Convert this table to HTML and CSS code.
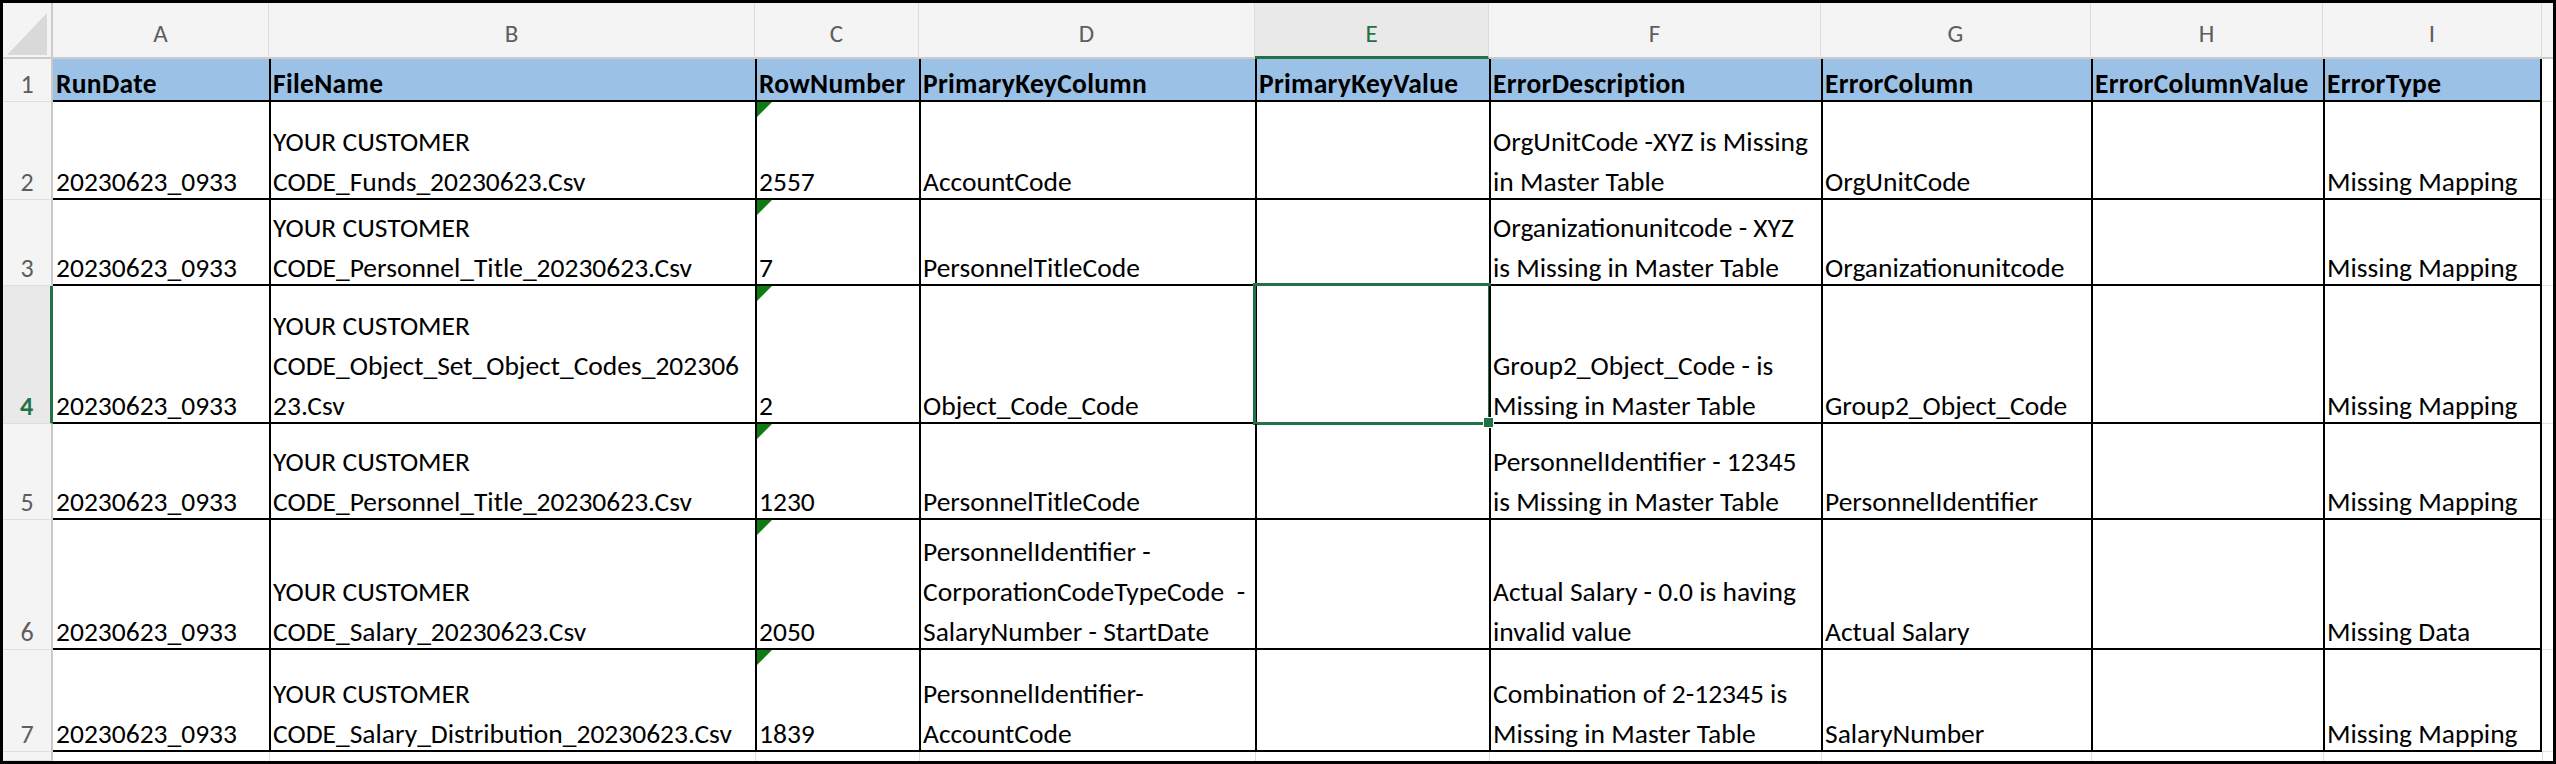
FILE: index.html
```html
<!DOCTYPE html>
<html lang="en">
<head>
<meta charset="utf-8">
<title>Error Log</title>
<link rel="stylesheet" href="styles.css">
</head>
<body>
<div class="frame">
  <div class="sheet">
    <div class="corner"><svg width="50" height="56" viewBox="0 0 50 56"><polygon points="4,52 44,52 44,10" fill="#d9d9d9"/></svg></div>
    <div class="colhdr">A</div>
    <div class="colhdr">B</div>
    <div class="colhdr">C</div>
    <div class="colhdr">D</div>
    <div class="colhdr active">E</div>
    <div class="colhdr">F</div>
    <div class="colhdr">G</div>
    <div class="colhdr">H</div>
    <div class="colhdr">I</div>
    <div class="colhdr last"></div>

    <div class="rowhdr"><span>1</span></div>
    <div class="cell hd ca"><span>RunDate</span></div>
    <div class="cell hd"><span>FileName</span></div>
    <div class="cell hd"><span>RowNumber</span></div>
    <div class="cell hd"><span>PrimaryKeyColumn</span></div>
    <div class="cell hd"><span>PrimaryKeyValue</span></div>
    <div class="cell hd"><span>ErrorDescription</span></div>
    <div class="cell hd"><span>ErrorColumn</span></div>
    <div class="cell hd"><span>ErrorColumnValue</span></div>
    <div class="cell hd ci"><span>ErrorType</span></div>
    <div class="jcell"></div>

    <div class="rowhdr"><span>2</span></div>
    <div class="cell ca"><span>20230623_0933</span></div>
    <div class="cell"><span>YOUR CUSTOMER<br>CODE_Funds_20230623.Csv</span></div>
    <div class="cell flag"><span>2557</span></div>
    <div class="cell"><span>AccountCode</span></div>
    <div class="cell"><span></span></div>
    <div class="cell"><span>OrgUnitCode -XYZ is Missing<br>in Master Table</span></div>
    <div class="cell"><span>OrgUnitCode</span></div>
    <div class="cell"><span></span></div>
    <div class="cell ci"><span>Missing Mapping</span></div>
    <div class="jcell"></div>

    <div class="rowhdr"><span>3</span></div>
    <div class="cell ca"><span>20230623_0933</span></div>
    <div class="cell"><span>YOUR CUSTOMER<br>CODE_Personnel_Title_20230623.Csv</span></div>
    <div class="cell flag"><span>7</span></div>
    <div class="cell"><span>PersonnelTitleCode</span></div>
    <div class="cell"><span></span></div>
    <div class="cell"><span>Organizationunitcode - XYZ<br>is Missing in Master Table</span></div>
    <div class="cell"><span>Organizationunitcode</span></div>
    <div class="cell"><span></span></div>
    <div class="cell ci"><span>Missing Mapping</span></div>
    <div class="jcell"></div>

    <div class="rowhdr active"><span>4</span></div>
    <div class="cell ca"><span>20230623_0933</span></div>
    <div class="cell"><span>YOUR CUSTOMER<br>CODE_Object_Set_Object_Codes_202306<br>23.Csv</span></div>
    <div class="cell flag"><span>2</span></div>
    <div class="cell"><span>Object_Code_Code</span></div>
    <div class="cell sel"><span></span></div>
    <div class="cell"><span>Group2_Object_Code - is<br>Missing in Master Table</span></div>
    <div class="cell"><span>Group2_Object_Code</span></div>
    <div class="cell"><span></span></div>
    <div class="cell ci"><span>Missing Mapping</span></div>
    <div class="jcell"></div>

    <div class="rowhdr"><span>5</span></div>
    <div class="cell ca"><span>20230623_0933</span></div>
    <div class="cell"><span>YOUR CUSTOMER<br>CODE_Personnel_Title_20230623.Csv</span></div>
    <div class="cell flag"><span>1230</span></div>
    <div class="cell"><span>PersonnelTitleCode</span></div>
    <div class="cell"><span></span></div>
    <div class="cell"><span>PersonnelIdentifier - 12345<br>is Missing in Master Table</span></div>
    <div class="cell"><span>PersonnelIdentifier</span></div>
    <div class="cell"><span></span></div>
    <div class="cell ci"><span>Missing Mapping</span></div>
    <div class="jcell"></div>

    <div class="rowhdr"><span>6</span></div>
    <div class="cell ca"><span>20230623_0933</span></div>
    <div class="cell"><span>YOUR CUSTOMER<br>CODE_Salary_20230623.Csv</span></div>
    <div class="cell flag"><span>2050</span></div>
    <div class="cell"><span>PersonnelIdentifier -<br>CorporationCodeTypeCode&nbsp; -<br>SalaryNumber - StartDate</span></div>
    <div class="cell"><span></span></div>
    <div class="cell"><span>Actual Salary - 0.0 is having<br>invalid value</span></div>
    <div class="cell"><span>Actual Salary</span></div>
    <div class="cell"><span></span></div>
    <div class="cell ci"><span>Missing Data</span></div>
    <div class="jcell"></div>

    <div class="rowhdr"><span>7</span></div>
    <div class="cell ca"><span>20230623_0933</span></div>
    <div class="cell"><span>YOUR CUSTOMER<br>CODE_Salary_Distribution_20230623.Csv</span></div>
    <div class="cell flag"><span>1839</span></div>
    <div class="cell"><span>PersonnelIdentifier-<br>AccountCode</span></div>
    <div class="cell"><span></span></div>
    <div class="cell"><span>Combination of 2-12345 is<br>Missing in Master Table</span></div>
    <div class="cell"><span>SalaryNumber</span></div>
    <div class="cell"><span></span></div>
    <div class="cell ci"><span>Missing Mapping</span></div>
    <div class="jcell"></div>

    <div class="rowhdr"></div>
    <div class="gap ga"></div>
    <div class="gap"></div>
    <div class="gap"></div>
    <div class="gap"></div>
    <div class="gap"></div>
    <div class="gap"></div>
    <div class="gap"></div>
    <div class="gap"></div>
    <div class="gap"></div>
    <div class="gap"></div>
  </div>
</div>
</body>
</html>
```

FILE: styles.css
```css
html, body {
  margin: 0;
  padding: 0;
  background: #ffffff;
}

.frame {
  width: 2556px;
  height: 764px;
  box-sizing: border-box;
  border: 3px solid #000000;
  overflow: hidden;
  background: #ffffff;
}

.sheet {
  display: grid;
  grid-template-columns: 50px 216px 486px 164px 336px 234px 332px 270px 232px 219px 11px;
  grid-template-rows: 56px 43px 98px 86px 138px 96px 130px 102px 9px;
  font-family: Carlito, Lato, sans-serif;
  font-size: 27.5px;
  color: #000000;
}

.sheet > div {
  box-sizing: border-box;
  min-width: 0;
}

.corner {
  background: #f4f4f4;
  border-right: 2px solid #cbcbcb;
  border-bottom: 2px solid #cbcbcb;
  overflow: hidden;
}

.corner svg {
  display: block;
}

.colhdr {
  background: #f4f4f4;
  border-right: 1px solid #dcdcdc;
  border-bottom: 2px solid #cbcbcb;
  display: flex;
  align-items: center;
  justify-content: center;
  padding-top: 7px;
  color: #5e5e5e;
  font-size: 25px;
}

.colhdr.active {
  background: #e9e9e9;
  color: #217346;
  border-bottom: 3px solid #217346;
}

.colhdr.last {
  border-right: 0;
}

.rowhdr {
  background: #f4f4f4;
  border-right: 2px solid #c9c9c9;
  border-bottom: 1px solid #dedede;
  display: flex;
  align-items: flex-end;
  justify-content: center;
  line-height: 40px;
  color: #5e5e5e;
  font-size: 26px;
}

.rowhdr > span {
  margin-bottom: -3px;
}

.rowhdr.active {
  background: #e9e9e9;
  color: #217346;
  font-weight: 700;
  border-right: 3px solid #217346;
}

.cell {
  position: relative;
  display: flex;
  align-items: flex-end;
  border-left: 2px solid #000000;
  border-bottom: 2px solid #000000;
  padding: 0 0 0 2px;
  line-height: 40px;
  white-space: nowrap;
}

.cell > span {
  margin-bottom: -4px;
}

.cell.ca {
  border-left: 0;
  padding-left: 3px;
}

.cell.ci {
  border-right: 2px solid #000000;
}

.cell.hd {
  background: #9bc2e6;
  font-weight: 700;
  letter-spacing: 0.3px;
}

.flag::before {
  content: "";
  position: absolute;
  left: 0;
  top: 0;
  border-top: 15px solid #0e7c12;
  border-right: 15px solid transparent;
}

.sel::after {
  content: "";
  position: absolute;
  left: -4px;
  top: -3px;
  right: -2px;
  bottom: -3px;
  border: 3px solid #217346;
  pointer-events: none;
}

.sel::before {
  content: "";
  position: absolute;
  right: -4px;
  bottom: -5px;
  width: 9px;
  height: 9px;
  background: #217346;
  box-shadow: 0 0 0 1px #ffffff;
  z-index: 2;
}

.jcell {
  border-bottom: 1px solid #e2e2e2;
}

.gap {
  border-left: 1px solid #dedede;
}

.gap.ga {
  border-left: 0;
}
```
